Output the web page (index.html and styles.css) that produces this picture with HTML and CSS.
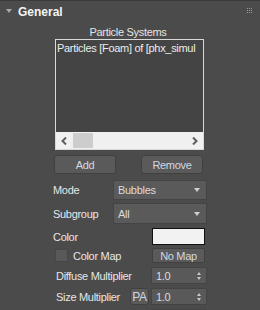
FILE: index.html
```html
<!DOCTYPE html>
<html lang="en">
<head>
  <meta charset="UTF-8">
  <title>General rollout</title>
  <link rel="stylesheet" href="styles.css">
</head>
<body>
  <div class="rollout">
    <div class="rollout-head">
      <span class="caret"></span>
      <span class="rollout-title">General</span>
      <span class="grip">
        <i></i><i></i><i></i><i></i><i></i><i></i><i></i><i></i><i></i>
      </span>
    </div>

    <div class="rollout-body">
      <div class="list-title">Particle Systems</div>
      <div class="listbox">
        <div class="list-items">
          <div class="list-item">Particles [Foam] of [phx_simul</div>
        </div>
        <div class="hscroll">
          <span class="arrow">
            <svg width="7" height="8" viewBox="0 0 7 8"><path d="M5 0.5 L1.5 4 L5 7.5" fill="none" stroke="#5e5e5e" stroke-width="2"/></svg>
          </span>
          <span class="track"><span class="thumb"></span></span>
          <span class="arrow">
            <svg width="7" height="8" viewBox="0 0 7 8"><path d="M2 0.5 L5.5 4 L2 7.5" fill="none" stroke="#5e5e5e" stroke-width="2"/></svg>
          </span>
        </div>
      </div>

      <div class="button-row">
        <button class="btn">Add</button>
        <button class="btn">Remove</button>
      </div>

      <div class="row row-mode">
        <span class="label">Mode</span>
        <div class="dropdown">Bubbles<span class="dd-arrow"></span></div>
      </div>
      <div class="row row-sub">
        <span class="label">Subgroup</span>
        <div class="dropdown">All<span class="dd-arrow"></span></div>
      </div>
      <div class="row row-color">
        <span class="label">Color</span>
        <div class="swatch"></div>
      </div>
      <div class="row row-map">
        <label class="check"><span class="box"></span>Color Map</label>
        <button class="btn btn-map">No Map</button>
      </div>
      <div class="row row-diffuse">
        <span class="label indent">Diffuse Multiplier</span>
        <div class="spinner">1.0<span class="spin"><b class="up"></b><b class="down"></b></span></div>
      </div>
      <div class="row row-size">
        <span class="label indent">Size Multiplier</span>
        <div class="size-right">
          <button class="btn btn-pa">PA</button>
          <div class="spinner">1.0<span class="spin"><b class="up"></b><b class="down"></b></span></div>
        </div>
      </div>
      <div class="row row-next">
        <div class="spinner"></div>
      </div>
    </div>
  </div>
</body>
</html>
```

FILE: styles.css
```css
body {
  margin: 0;
  width: 260px;
  height: 310px;
  overflow: hidden;
  background: #4b4b4b;
  font-family: 'Liberation Sans', Arial, sans-serif;
  font-size: 11px;
  letter-spacing: -0.3px;
  color: #dcdcdc;
}

.rollout {
  border-top: 1px solid #3a3a3a;
}

.rollout-head {
  display: flex;
  align-items: center;
  height: 21px;
  padding-left: 6px;
}

.caret {
  width: 0;
  height: 0;
  border-left: 3px solid transparent;
  border-right: 3px solid transparent;
  border-top: 4px solid #a8a8a8;
  margin-right: 6px;
  margin-top: -2px;
}

.rollout-title {
  font-weight: bold;
  font-size: 12px;
  letter-spacing: 0;
  color: #f4f4f4;
}

.grip {
  margin-left: auto;
  margin-right: 8px;
  display: grid;
  grid-template-columns: repeat(3, 1px);
  gap: 1px;
  margin-top: -3px;
}

.grip i {
  width: 1px;
  height: 1px;
  background: #9a9a9a;
}

.rollout-body {
  padding-left: 55px;
  width: 153px;
}

.list-title {
  text-align: center;
  width: 146px;
  margin-top: 4px;
  height: 13px;
  line-height: 13px;
  color: #e4e4e4;
}

.listbox {
  width: 147px;
  height: 109px;
  border: 1px solid #d8d8d8;
  display: flex;
  flex-direction: column;
  background: #444;
}

.list-items {
  flex: 1;
  overflow: hidden;
  padding: 2px 0 0 1px;
}

.list-item {
  white-space: nowrap;
  color: #ececec;
}

.hscroll {
  display: flex;
  align-items: center;
  height: 17px;
  background: #f0f0f0;
}

.arrow {
  width: 17px;
  height: 17px;
  display: flex;
  align-items: center;
  justify-content: center;
}

.track {
  flex: 1;
  height: 15px;
}

.thumb {
  display: block;
  width: 20px;
  height: 15px;
  background: #cdcdcd;
}

.button-row {
  display: flex;
  justify-content: space-between;
  width: 149px;
  margin: 5px 0 0 -1px;
}

.btn {
  font-family: inherit;
  font-size: 11px;
  letter-spacing: -0.3px;
  color: #d2d8e0;
  background: #5a5a5a;
  border: 1px solid #404040;
  border-radius: 3px;
  padding: 0;
  height: 19px;
}

.button-row .btn {
  width: 62px;
}

.row {
  display: flex;
  align-items: center;
  justify-content: space-between;
  width: 154px;
  margin-left: -2px;
}

.row-mode {
  margin-top: 6px;
  height: 20px;
}

.row-sub {
  margin-top: 3px;
  height: 21px;
}

.row-color {
  margin-top: 4px;
  height: 17px;
}

.row-map {
  margin-top: 3px;
  height: 15px;
}

.row-diffuse {
  margin-top: 4px;
  height: 17px;
}

.row-size {
  margin-top: 4px;
  height: 17px;
}

.row-next {
  margin-top: 4px;
  height: 3px;
  justify-content: flex-end;
}

.label {
  color: #e6e6e6;
}

.indent {
  padding-left: 3px;
}

.dropdown {
  box-sizing: border-box;
  width: 94px;
  height: 100%;
  background: #5a5a5a;
  border: 1px solid #444;
  padding-left: 4px;
  display: flex;
  align-items: center;
}

.dd-arrow {
  margin-left: auto;
  margin-right: 6px;
  width: 0;
  height: 0;
  border-left: 3px solid transparent;
  border-right: 3px solid transparent;
  border-top: 4px solid #d0d0d0;
}

.swatch {
  box-sizing: border-box;
  width: 53px;
  height: 17px;
  margin-right: 2px;
  background: #f2f2f2;
  border: 1px solid #111;
}

.check {
  display: flex;
  align-items: center;
  color: #e6e6e6;
  padding-left: 2px;
}

.box {
  box-sizing: border-box;
  width: 13px;
  height: 13px;
  background: #595959;
  border: 1px solid #474747;
  margin-right: 5px;
}

.btn-map {
  width: 53px;
  height: 15px;
  margin-right: 2px;
  border-radius: 2px;
}

.spinner {
  box-sizing: border-box;
  width: 56px;
  height: 100%;
  background: #595959;
  border: 1px solid #444;
  padding-left: 4px;
  display: flex;
  align-items: center;
}

.spin {
  margin-left: auto;
  margin-right: 5px;
  display: flex;
  flex-direction: column;
  gap: 2px;
}

.spin b {
  width: 0;
  height: 0;
  border-left: 2px solid transparent;
  border-right: 2px solid transparent;
}

.spin .up {
  border-bottom: 3px solid #c8c8c8;
}

.spin .down {
  border-top: 3px solid #c8c8c8;
}

.size-right {
  display: flex;
  align-items: center;
  gap: 2px;
  height: 100%;
}

.btn-pa {
  width: 19px;
  height: 17px;
  font-size: 12px;
}
```
